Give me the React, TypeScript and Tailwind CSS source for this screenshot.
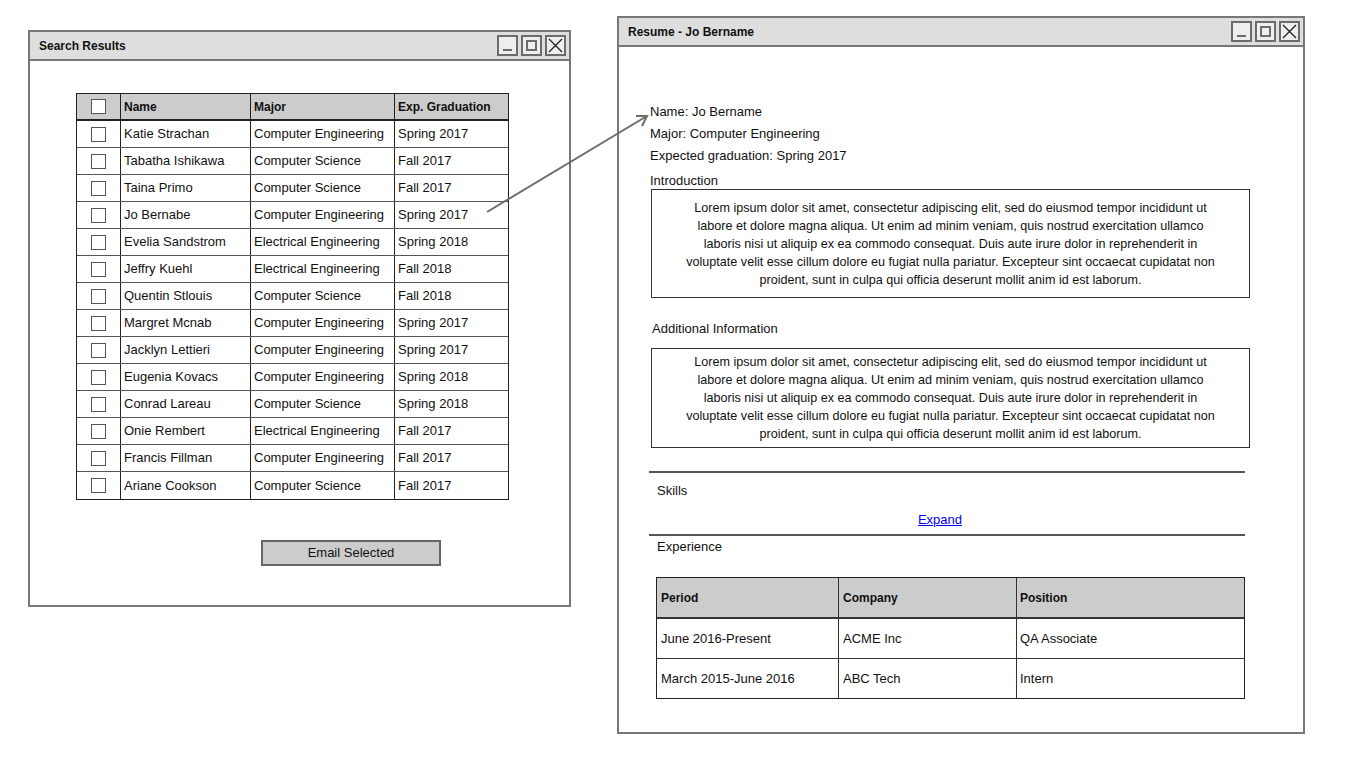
import React from "react";

const students = [
  ["Katie Strachan", "Computer Engineering", "Spring 2017"],
  ["Tabatha Ishikawa", "Computer Science", "Fall 2017"],
  ["Taina Primo", "Computer Science", "Fall 2017"],
  ["Jo Bernabe", "Computer Engineering", "Spring 2017"],
  ["Evelia Sandstrom", "Electrical Engineering", "Spring 2018"],
  ["Jeffry Kuehl", "Electrical Engineering", "Fall 2018"],
  ["Quentin Stlouis", "Computer Science", "Fall 2018"],
  ["Margret Mcnab", "Computer Engineering", "Spring 2017"],
  ["Jacklyn Lettieri", "Computer Engineering", "Spring 2017"],
  ["Eugenia Kovacs", "Computer Engineering", "Spring 2018"],
  ["Conrad Lareau", "Computer Science", "Spring 2018"],
  ["Onie Rembert", "Electrical Engineering", "Fall 2017"],
  ["Francis Fillman", "Computer Engineering", "Fall 2017"],
  ["Ariane Cookson", "Computer Science", "Fall 2017"],
];

const lorem = [
  "Lorem ipsum dolor sit amet, consectetur adipiscing elit, sed do eiusmod tempor incididunt ut",
  "labore et dolore magna aliqua. Ut enim ad minim veniam, quis nostrud exercitation ullamco",
  "laboris nisi ut aliquip ex ea commodo consequat. Duis aute irure dolor in reprehenderit in",
  "voluptate velit esse cillum dolore eu fugiat nulla pariatur. Excepteur sint occaecat cupidatat non",
  "proident, sunt in culpa qui officia deserunt mollit anim id est laborum.",
];

const WinButtons = () => (
  <div className="flex gap-[3px]">
    <div className="w-[21px] h-[21px] border-2 border-[#6b6b6b] bg-[#eee] flex items-end justify-center pb-[3px]">
      <div className="w-[9px] h-[2px] bg-[#6b6b6b]" />
    </div>
    <div className="w-[21px] h-[21px] border-2 border-[#6b6b6b] bg-[#eee] flex items-center justify-center">
      <div className="w-[11px] h-[11px] border-2 border-[#6b6b6b]" />
    </div>
    <div className="w-[21px] h-[21px] border-2 border-[#6b6b6b] bg-[#eee] flex items-center justify-center">
      <svg width="15" height="15" viewBox="0 0 15 15">
        <path d="M1 1 L14 14 M14 1 L1 14" stroke="#222" strokeWidth="1.4" />
      </svg>
    </div>
  </div>
);

const TitleBar = ({ title }: { title: string }) => (
  <div className="h-[29px] bg-[#dedede] border-b-2 border-[#777] flex items-center justify-between pl-[9px] pr-[3px]">
    <span className="font-bold text-[12px] text-[#111]">{title}</span>
    <WinButtons />
  </div>
);

const Checkbox = () => (
  <div className="w-[15px] h-[15px] border-[1.5px] border-[#555] bg-white" />
);

const LoremBox = ({ h }: { h: string }) => (
  <div
    className={`ml-[32px] w-[599px] ${h} border border-[#333] flex flex-col items-center justify-center text-[12.6px] leading-[18px] text-[#111]`}
  >
    {lorem.map((l) => (
      <div key={l} className="whitespace-nowrap">
        {l}
      </div>
    ))}
  </div>
);

export default function App() {
  return (
    <div
      className="relative w-[1366px] h-[768px] bg-white overflow-hidden text-[#111]"
      style={{ fontFamily: '"Liberation Sans", Arial, sans-serif' }}
    >
      {/* Search results window */}
      <div className="absolute left-[28px] top-[30px] w-[543px] h-[577px] border-2 border-[#777] bg-white">
        <TitleBar title="Search Results" />
        <div className="ml-[46px] mt-[32px] w-[433px] border border-[#222]">
          <div className="flex h-[27px] bg-[#cccccc] border-b-2 border-[#222] text-[12px] font-bold">
            <div className="w-[44px] flex items-center justify-center border-r border-[#222]">
              <Checkbox />
            </div>
            <div className="w-[130px] flex items-center pl-[3px] border-r border-[#222]">Name</div>
            <div className="w-[144px] flex items-center pl-[3px] border-r border-[#222]">Major</div>
            <div className="flex-1 flex items-center pl-[3px]">Exp. Graduation</div>
          </div>
          {students.map(([n, m, g], i) => (
            <div
              key={n}
              className={`flex h-[27px] text-[13px] ${i < students.length - 1 ? "border-b border-[#555]" : ""}`}
            >
              <div className="w-[44px] flex items-center justify-center border-r border-[#222]">
                <Checkbox />
              </div>
              <div className="w-[130px] flex items-center pl-[3px] border-r border-[#222]">{n}</div>
              <div className="w-[144px] flex items-center pl-[3px] border-r border-[#222]">{m}</div>
              <div className="flex-1 flex items-center pl-[3px]">{g}</div>
            </div>
          ))}
        </div>
        <div className="ml-[231px] mt-[40px] w-[180px] h-[26px] bg-[#cccccc] border-2 border-[#666] flex items-center justify-center text-[13px]">
          Email Selected
        </div>
      </div>

      {/* Resume window */}
      <div className="absolute left-[617px] top-[16px] w-[688px] h-[718px] border-2 border-[#777] bg-white">
        <TitleBar title="Resume - Jo Bername" />
        <div className="pl-[31px] pt-[54px] text-[13px] leading-[22px]">
          <div>Name: Jo Bername</div>
          <div>Major: Computer Engineering</div>
          <div>Expected graduation: Spring 2017</div>
        </div>
        <div className="ml-[31px] mt-[6px] h-[16px] text-[13px] leading-[16px]">Introduction</div>
        <LoremBox h="h-[109px]" />
        <div className="ml-[33px] mt-[23px] h-[16px] text-[13px] leading-[16px]">
          Additional Information
        </div>
        <div className="mt-[11px]">
          <LoremBox h="h-[100px]" />
        </div>
        <div className="ml-[30px] mt-[23px] w-[596px] h-[2px] bg-[#555]" />
        <div className="ml-[38px] mt-[10px] h-[16px] text-[13px] leading-[16px]">Skills</div>
        <div className="mt-[13px] h-[16px] text-[13px] leading-[16px] text-center pl-[30px] w-[612px]">
          <span className="text-[#0000ee] underline">Expand</span>
        </div>
        <div className="ml-[30px] mt-[6px] w-[596px] h-[2px] bg-[#555]" />
        <div className="ml-[38px] mt-[3px] h-[16px] text-[13px] leading-[16px]">Experience</div>
        <div className="ml-[37px] mt-[22px] w-[589px] border border-[#222] text-[13px]">
          <div className="flex h-[41px] bg-[#cccccc] border-b-2 border-[#333] text-[12px] font-bold">
            <div className="w-[182px] flex items-center pl-[4px] border-r border-[#333]">Period</div>
            <div className="w-[178px] flex items-center pl-[4px] border-r border-[#333]">Company</div>
            <div className="flex-1 flex items-center pl-[3px]">Position</div>
          </div>
          <div className="flex h-[40px] border-b border-[#333]">
            <div className="w-[182px] flex items-center pl-[4px] border-r border-[#333]">June 2016-Present</div>
            <div className="w-[178px] flex items-center pl-[4px] border-r border-[#333]">ACME Inc</div>
            <div className="flex-1 flex items-center pl-[3px]">QA Associate</div>
          </div>
          <div className="flex h-[39px]">
            <div className="w-[182px] flex items-center pl-[4px] border-r border-[#333]">March 2015-June 2016</div>
            <div className="w-[178px] flex items-center pl-[4px] border-r border-[#333]">ABC Tech</div>
            <div className="flex-1 flex items-center pl-[3px]">Intern</div>
          </div>
        </div>
      </div>

      {/* Connector arrow */}
      <svg className="absolute left-0 top-0 pointer-events-none" width="1366" height="768">
        <path d="M487 212 L647 116" stroke="#6b6b6b" strokeWidth="2" fill="none" />
        <path d="M636 116 L647 116 L642 126" stroke="#6b6b6b" strokeWidth="2" fill="none" />
      </svg>
    </div>
  );
}
